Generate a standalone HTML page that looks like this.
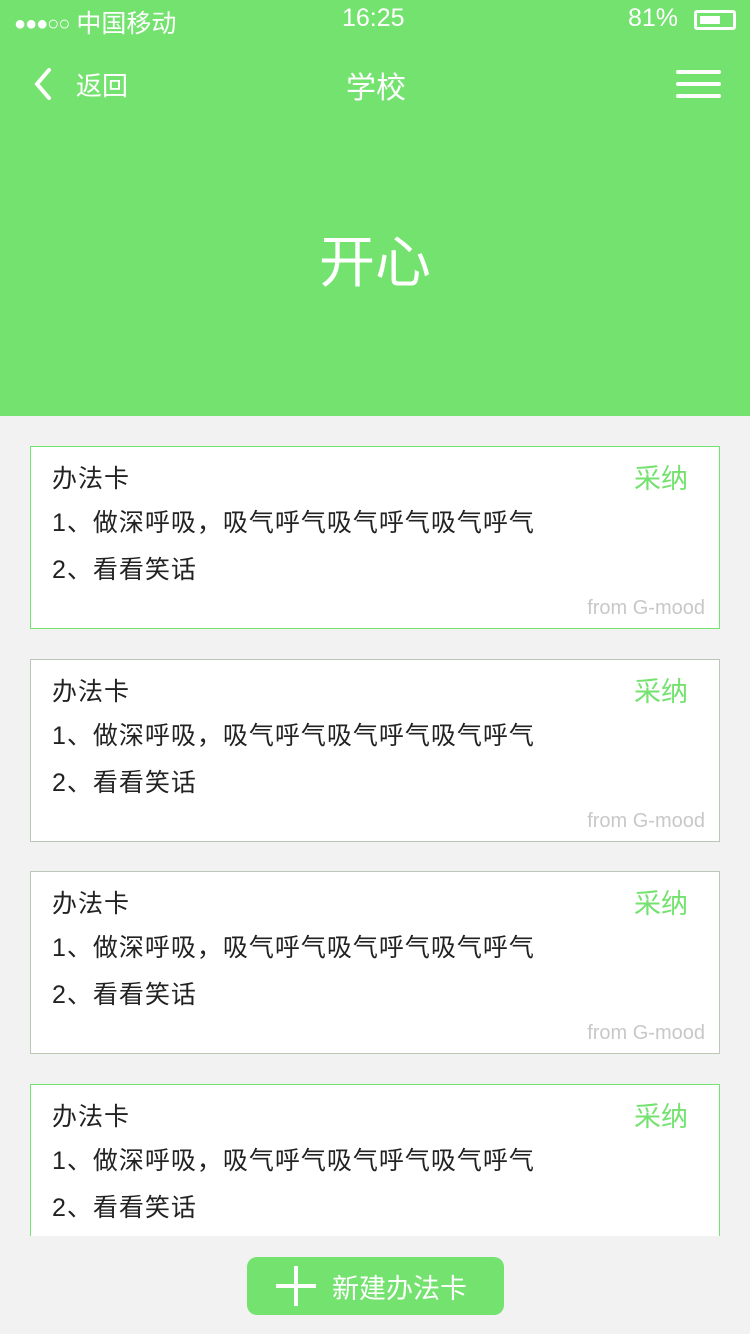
<!DOCTYPE html>
<html><head><meta charset="utf-8"><style>
*{margin:0;padding:0;box-sizing:border-box}
body{width:750px;height:1334px;overflow:hidden;background:#f2f2f2;font-family:"Liberation Sans","Noto Sans CJK SC",sans-serif;position:relative}
.hdr{position:absolute;left:0;top:0;width:750px;height:416px;background:#74e26f;color:#fff}
.a{position:absolute;white-space:nowrap}
.card{position:absolute;left:30px;width:690px;height:183px;background:#fff;border:1px solid #74e26f}
.card .t{position:absolute;left:21px;font-size:25px;color:#222;line-height:1;letter-spacing:1px}
.card .ok{position:absolute;left:603px;top:10px;font-size:27px;color:#74e26f}
.card .f{position:absolute;right:14px;top:150px;font-size:20px;color:#c8c8c8}
</style></head><body>
<div class="hdr">
 <div class="a" style="left:14px;top:4px;font-size:25px"><span style="font-size:20px;letter-spacing:-1px;vertical-align:2px">●●●○○</span> 中国移动</div>
 <div class="a" style="left:342px;top:4px;font-size:25px">16:25</div>
 <div class="a" style="left:628px;top:4px;font-size:25px">81%</div>
 <div class="a" style="left:694px;top:10px;width:42px;height:20px;border:3px solid #fff;border-radius:3px"><div style="position:absolute;left:3px;top:3px;width:20px;height:8px;background:#fff"></div></div>
 <svg class="a" style="left:30px;top:66px" width="24" height="36"><path d="M19 4 L7 18 L19 32" stroke="#fff" stroke-width="4" fill="none" stroke-linecap="round"/></svg>
 <div class="a" style="left:76px;top:66px;font-size:26px">返回</div>
 <div class="a" style="left:346px;top:63px;font-size:30px">学校</div>
 <div class="a" style="left:676px;top:70px;width:45px;height:4px;background:#fff;border-radius:2px"></div>
 <div class="a" style="left:676px;top:82px;width:45px;height:4px;background:#fff;border-radius:2px"></div>
 <div class="a" style="left:676px;top:94px;width:45px;height:4px;background:#fff;border-radius:2px"></div>
 <div class="a" style="left:319px;top:218px;font-size:56px">开心</div>
</div>

<div class="card" style="top:446px"><div class="t" style="top:20px">办法卡</div><div class="ok">采纳</div><div class="t" style="top:64px">1、做深呼吸，吸气呼气吸气呼气吸气呼气</div><div class="t" style="top:111px">2、看看笑话</div><div class="f">from G-mood</div></div>
<div class="card" style="top:659px;border-color:#b9c9b6"><div class="t" style="top:20px">办法卡</div><div class="ok">采纳</div><div class="t" style="top:64px">1、做深呼吸，吸气呼气吸气呼气吸气呼气</div><div class="t" style="top:111px">2、看看笑话</div><div class="f">from G-mood</div></div>
<div class="card" style="top:871px;border-color:#b9c9b6"><div class="t" style="top:20px">办法卡</div><div class="ok">采纳</div><div class="t" style="top:64px">1、做深呼吸，吸气呼气吸气呼气吸气呼气</div><div class="t" style="top:111px">2、看看笑话</div><div class="f">from G-mood</div></div>
<div class="card" style="top:1084px"><div class="t" style="top:20px">办法卡</div><div class="ok">采纳</div><div class="t" style="top:64px">1、做深呼吸，吸气呼气吸气呼气吸气呼气</div><div class="t" style="top:111px">2、看看笑话</div></div>

<div class="a" style="left:0;top:1236px;width:750px;height:98px;background:#f2f2f2"></div>
<div class="a" style="left:247px;top:1257px;width:257px;height:58px;background:#74e26f;border-radius:10px;color:#fff">
 <div class="a" style="left:29px;top:27px;width:40px;height:4px;background:#fff"></div>
 <div class="a" style="left:47px;top:9px;width:4px;height:40px;background:#fff"></div>
 <div class="a" style="left:85px;top:10px;font-size:27px">新建办法卡</div>
</div>
</body></html>
